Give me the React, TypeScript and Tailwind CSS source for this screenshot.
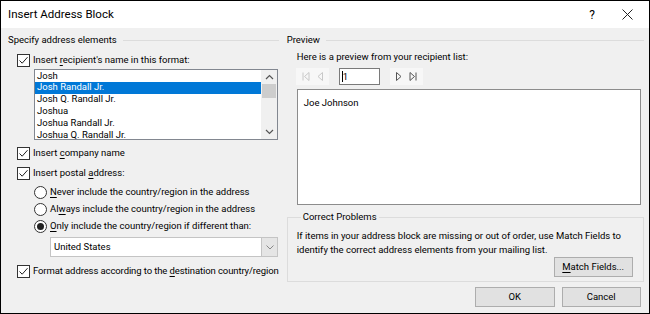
import React from 'react';

const font = { fontFamily: 'Roboto, "Open Sans", sans-serif' };

function Check({ checked = true }: { checked?: boolean }) {
  return (
    <span className="w-[13px] h-[13px] border border-[#333] bg-white flex items-center justify-center shrink-0">
      {checked && (
        <svg width="11" height="11" viewBox="0 0 11 11">
          <path d="M1.5 5.5 L4.2 8.2 L9.5 2.2" fill="none" stroke="#222" strokeWidth="1" />
        </svg>
      )}
    </span>
  );
}

function Radio({ checked = false }: { checked?: boolean }) {
  return (
    <span className="w-[13px] h-[13px] rounded-full border border-[#333] bg-white flex items-center justify-center shrink-0">
      {checked && <span className="w-[7px] h-[7px] rounded-full bg-[#222]" />}
    </span>
  );
}

function GroupHeader({ label }: { label: string }) {
  return (
    <div className="h-[14px] flex items-center gap-[6px]">
      <span className="whitespace-nowrap">{label}</span>
      <span className="flex-1 h-px bg-[#dcdcdc]" />
    </div>
  );
}

const names = [
  'Josh',
  'Josh Randall Jr.',
  'Josh Q. Randall Jr.',
  'Joshua',
  'Joshua Randall Jr.',
  'Joshua Q. Randall Jr.',
];

export default function App() {
  return (
    <div
      className="w-[650px] h-[314px] border border-black bg-[#f0f0f0] flex flex-col text-[9.5px] text-black overflow-hidden whitespace-nowrap"
      style={font}
    >
      <div className="h-[27px] bg-white flex items-center pl-[7px] shrink-0">
        <span className="text-[11.5px]">Insert Address Block</span>
        <span className="ml-auto w-[20px] text-center text-[12px] mr-[18px]">?</span>
        <span className="w-[14px] flex justify-center mr-[15px]">
          <svg width="11" height="11" viewBox="0 0 11 11">
            <path d="M0.5 0.5 L10.5 10.5 M10.5 0.5 L0.5 10.5" stroke="#222" strokeWidth="1" />
          </svg>
        </span>
      </div>

      <div className="flex px-[7px] pt-[5px]">
        {/* left */}
        <div className="w-[272px] flex flex-col">
          <GroupHeader label="Specify address elements" />
          <div className="h-[14px] mt-[6px] ml-[9px] flex items-center gap-[3px]">
            <Check />
            <span>Insert <u className="underline-offset-2">r</u>ecipient's name in this format:</span>
          </div>
          <div className="mt-[2px] ml-[26px] w-[244px] h-[71px] border border-[#828790] bg-white flex overflow-hidden">
            <div className="flex-1 flex flex-col">
              {names.map((n, i) => (
                <div
                  key={n}
                  className={
                    'h-[11.8px] shrink-0 flex items-center pl-[2px] pb-px leading-none ' +
                    (i === 1 ? 'bg-[#0078d7] text-white' : '')
                  }
                >
                  {n}
                </div>
              ))}
            </div>
            <div className="w-[16px] bg-[#f0f0f0] flex flex-col items-center">
              <div className="h-[14px] flex items-center">
                <svg width="9" height="6" viewBox="0 0 9 6">
                  <path d="M1 5 L4.5 1.5 L8 5" fill="none" stroke="#555" strokeWidth="1.2" />
                </svg>
              </div>
              <div className="w-[14px] h-[14px] bg-[#cdcdcd]" />
              <div className="flex-1" />
              <div className="h-[14px] flex items-center">
                <svg width="9" height="6" viewBox="0 0 9 6">
                  <path d="M1 1 L4.5 4.5 L8 1" fill="none" stroke="#555" strokeWidth="1.2" />
                </svg>
              </div>
            </div>
          </div>
          <div className="h-[14px] mt-[6px] ml-[9px] flex items-center gap-[3px]">
            <Check />
            <span>Insert <u className="underline-offset-2">c</u>ompany name</span>
          </div>
          <div className="h-[14px] mt-[6px] ml-[9px] flex items-center gap-[3px]">
            <Check />
            <span>Insert postal <u className="underline-offset-2">a</u>ddress:</span>
          </div>
          <div className="h-[14px] mt-[5px] ml-[26px] flex items-center gap-[3px]">
            <Radio />
            <span><u className="underline-offset-2">N</u>ever include the country/region in the address</span>
          </div>
          <div className="h-[14px] mt-[3px] ml-[26px] flex items-center gap-[3px]">
            <Radio />
            <span>Al<u className="underline-offset-2">w</u>ays include the country/region in the address</span>
          </div>
          <div className="h-[14px] mt-[3px] ml-[26px] flex items-center gap-[3px]">
            <Radio checked />
            <span><u className="underline-offset-2">O</u>nly include the country/region if different than:</span>
          </div>
          <div className="mt-[4px] ml-[42px] w-[228px] h-[20px] border border-[#c4c4c4] bg-white flex">
            <span className="flex-1 flex items-center pl-[3px]">United States</span>
            <span className="w-[16px] bg-[#e5e5e5] border-l border-[#c4c4c4] flex items-center justify-center">
              <svg width="8" height="5" viewBox="0 0 8 5">
                <path d="M0.5 0.5 L4 4 L7.5 0.5" fill="none" stroke="#888" strokeWidth="1" />
              </svg>
            </span>
          </div>
          <div className="h-[14px] mt-[7px] ml-[9px] flex items-center gap-[3px]">
            <Check />
            <span className="tracking-[-0.1px]">Format address according to the <u className="underline-offset-2">d</u>estination country/region</span>
          </div>
        </div>

        {/* right */}
        <div className="w-[357px] ml-[8px] flex flex-col">
          <GroupHeader label="Preview" />
          <div className="h-[14px] mt-[3px] ml-[10px] flex items-center">
            Here is a preview from your recipient list:
          </div>
          <div className="h-[17px] mt-[4px] ml-[9px] flex items-center">
            <div className="w-[33px] h-[17px] bg-[#f7f7f7] flex items-center justify-center gap-[7px]">
              <svg width="8" height="9" viewBox="0 0 8 9">
                <path d="M1 0.5 V8.5 M7 0.5 L2.5 4.5 L7 8.5 Z" fill="none" stroke="#c8c8c8" strokeWidth="1" />
              </svg>
              <svg width="6" height="9" viewBox="0 0 6 9">
                <path d="M5.5 0.5 L1 4.5 L5.5 8.5 Z" fill="none" stroke="#c8c8c8" strokeWidth="1" />
              </svg>
            </div>
            <div className="w-[41px] h-[17px] ml-[10px] border border-[#7a7a7a] bg-white flex items-center pl-[2px]">
              <span className="w-px h-[11px] bg-black" />
              <span className="leading-none">1</span>
            </div>
            <div className="w-[33px] h-[17px] ml-[10px] bg-[#f7f7f7] flex items-center justify-center gap-[7px]">
              <svg width="6" height="9" viewBox="0 0 6 9">
                <path d="M0.5 0.5 L5 4.5 L0.5 8.5 Z" fill="none" stroke="#555" strokeWidth="1" />
              </svg>
              <svg width="8" height="9" viewBox="0 0 8 9">
                <path d="M7 0.5 V8.5 M1 0.5 L5.5 4.5 L1 8.5 Z" fill="none" stroke="#555" strokeWidth="1" />
              </svg>
            </div>
          </div>
          <div className="mt-[4px] ml-[10px] w-[344px] h-[116px] border border-[#8c8c8c] bg-white pl-[6px] pt-[6px]">
            Joe Johnson
          </div>
          <fieldset className="mt-[5px] w-[357px] border border-[#dcdcdc] pl-[9px] pr-[10px] pb-[4px]">
            <legend className="ml-[4px] px-[2px] leading-[14px]">Correct Problems</legend>
            <div className="leading-[14px] mt-[5px]">
              If items in your address block are missing or out of order, use Match Fields to
              <br />
              identify the correct address elements from your mailing list.
            </div>
            <div className="flex justify-end">
              <button className="w-[79px] h-[20px] bg-[#e1e1e1] border border-[#adadad]">
                <u className="underline-offset-2">M</u>atch Fields...
              </button>
            </div>
          </fieldset>
          <div className="mt-[5px] pr-[3px] flex justify-end gap-[7px]">
            <button className="w-[80px] h-[20px] bg-[#e1e1e1] border border-[#adadad]">OK</button>
            <button className="w-[79px] h-[20px] bg-[#e1e1e1] border border-[#adadad]">Cancel</button>
          </div>
        </div>
      </div>
    </div>
  );
}
